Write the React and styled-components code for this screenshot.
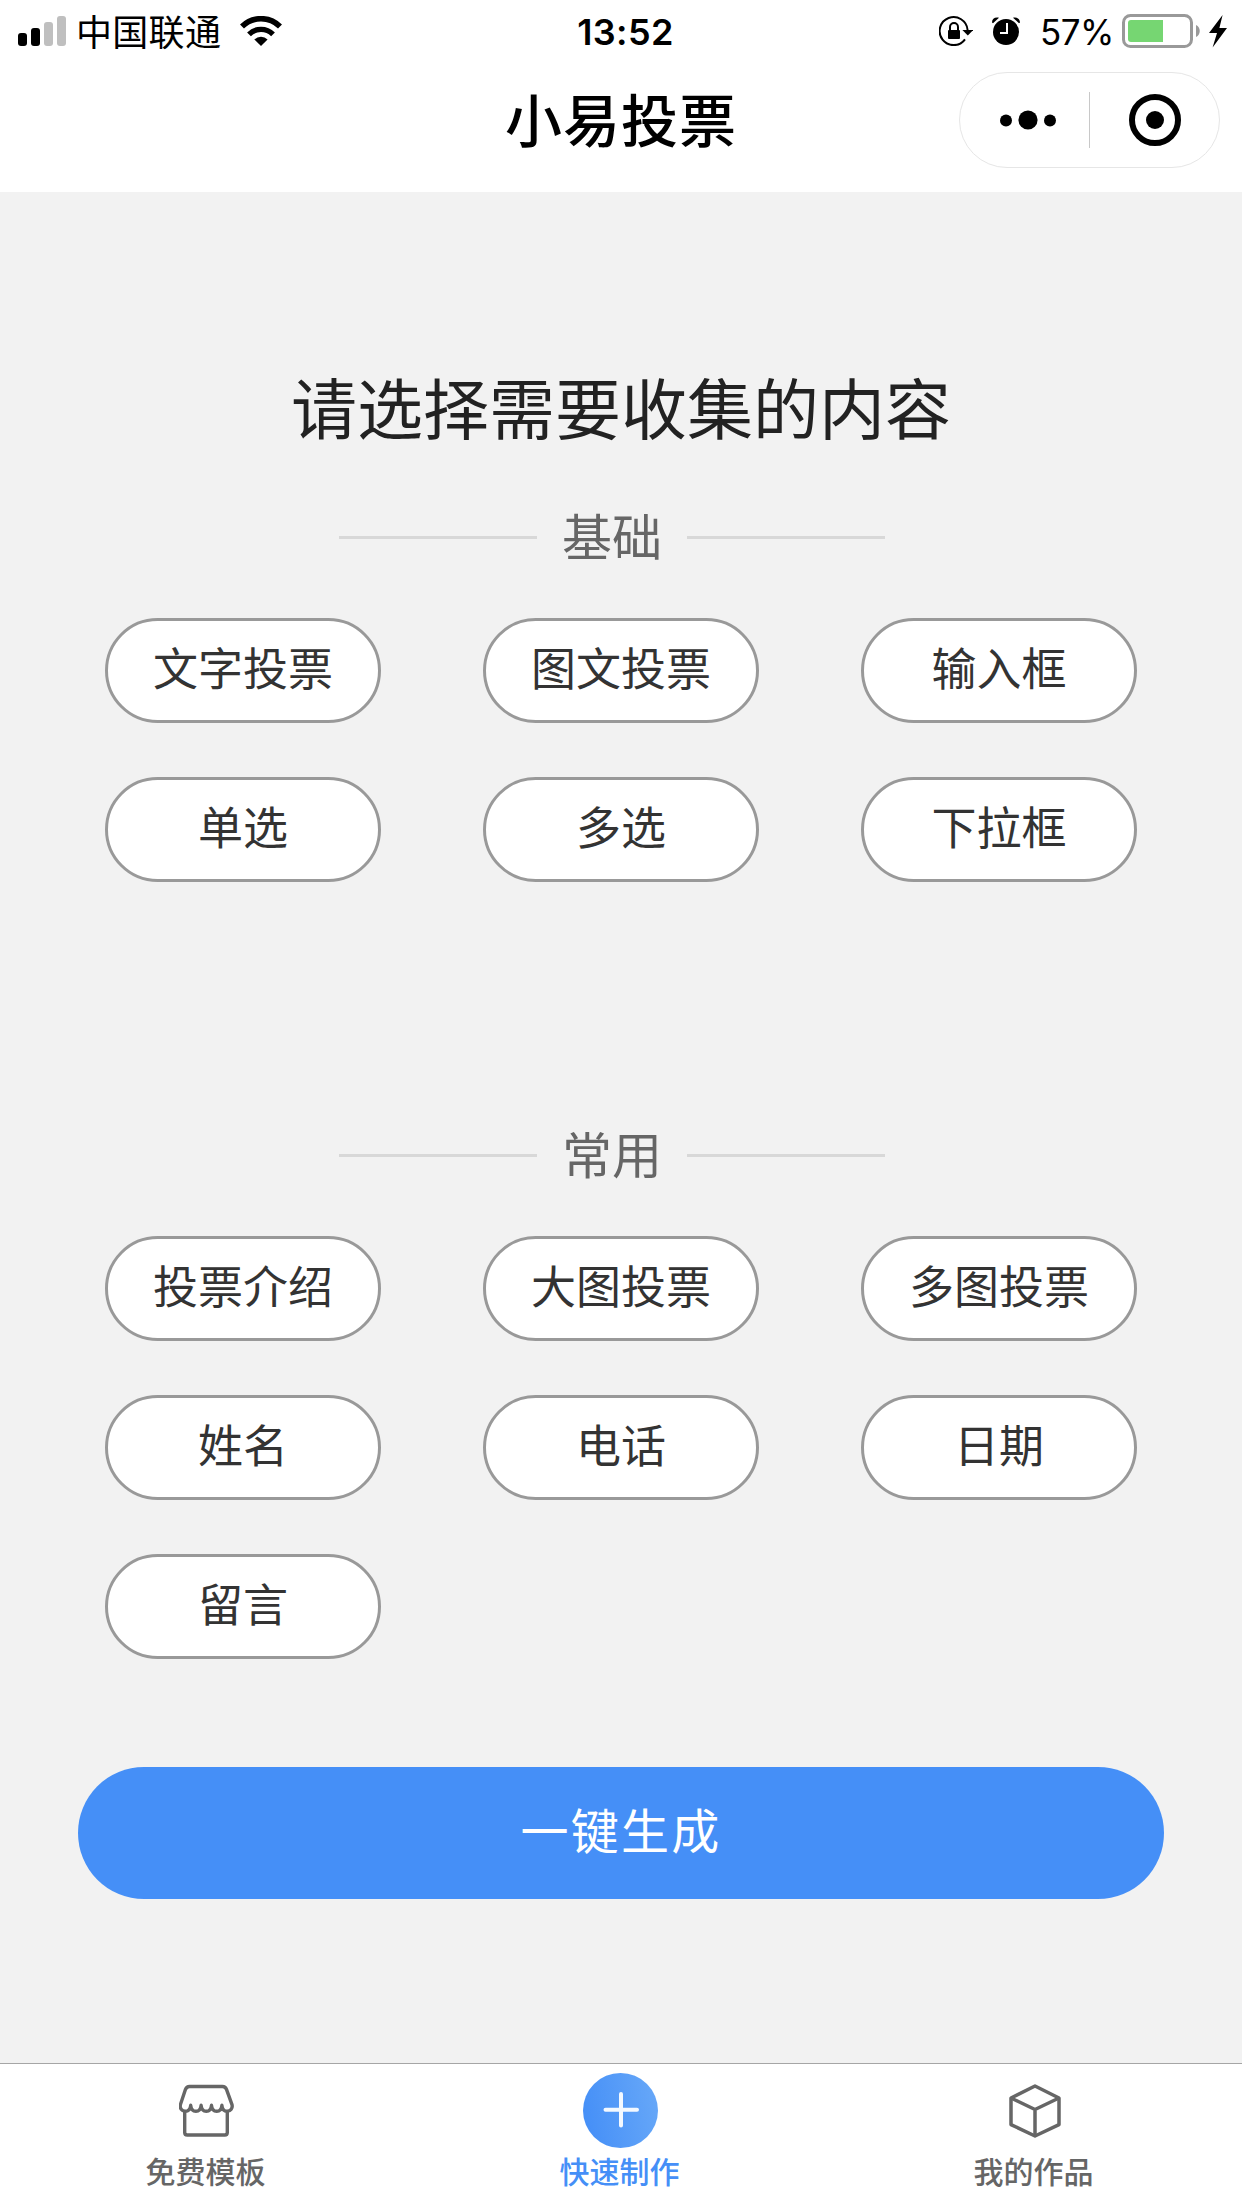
import React from 'react'
import styled, { createGlobalStyle } from 'styled-components'

const GlobalStyle = createGlobalStyle`
  body {
    margin: 0;
    background: #f2f2f2;
    font-family: 'Noto Sans CJK SC', sans-serif;
  }
`

const PageWrapper = styled.div`
  display: flex;
  flex-direction: column;
  width: 1242px;
  height: 2208px;
  background: #f2f2f2;
  overflow: hidden;
`

const Header = styled.header`
  display: flex;
  flex-direction: column;
  height: 192px;
  background: #fff;
  color: #000;
`

const StatusBar = styled.div`
  display: grid;
  grid-template-columns: 1fr 200px 1fr;
  align-items: center;
  height: 60px;
`

const StatusLeft = styled.div`
  display: flex;
  align-items: center;
  height: 60px;
  padding-left: 18px;
`

const StatusRight = styled.div`
  display: flex;
  align-items: center;
  justify-content: flex-end;
  height: 60px;
  padding-right: 14px;
`

const Carrier = styled.span`
  margin: 0 19px 0 9px;
  padding-bottom: 2px;
  font-size: 36px;
  line-height: 58px;
  letter-spacing: 0.3px;
`

const Clock = styled.span`
  padding: 2px 0 0 9px;
  font-family: Inter, sans-serif;
  font-size: 36px;
  font-weight: 600;
  line-height: 60px;
  letter-spacing: 0.4px;
  text-align: center;
`

const Percent = styled.span`
  width: 74px;
  margin: 2px 8px 0 20px;
  font-family: Inter, sans-serif;
  font-size: 35px;
  line-height: 60px;
  letter-spacing: -0.5px;
  white-space: nowrap;
`

const StatusIcon = styled.svg`
  margin-left: ${({ $gap }) => $gap || 0}px;
`

const NavBar = styled.div`
  display: grid;
  grid-template-columns: 1fr auto 1fr;
  align-items: center;
  height: 120px;
`

const NavTitle = styled.h1`
  grid-column: 2;
  margin: 0;
  padding-bottom: 6px;
  font-size: 57px;
  font-weight: 500;
  line-height: 114px;
  letter-spacing: 1px;
`

const Capsule = styled.div`
  display: flex;
  align-items: center;
  justify-self: end;
  box-sizing: border-box;
  width: 261px;
  height: 96px;
  margin-right: 22px;
  border: 1px solid #e6e6e6;
  border-radius: 48px;
`

const CapsuleButton = styled.button`
  display: flex;
  align-items: center;
  justify-content: center;
  width: 129px;
  padding: 0 0 0 ${({ $inset }) => $inset || 0}px;
  border: 0;
  background: none;
`

const CapsuleDivider = styled.span`
  width: 1px;
  height: 56px;
  background: #c8c8c8;
`

const Content = styled.main`
  display: flex;
  flex: 1;
  flex-direction: column;
  align-items: center;
`

const ContentTitle = styled.h2`
  margin: 163px 0 0;
  padding-bottom: 2px;
  color: #222;
  font-size: 66px;
  font-weight: 400;
  line-height: 100px;
`

const Section = styled.section`
  display: flex;
  flex-direction: column;
  align-items: center;
  width: 100%;
  height: 618px;
`

const SectionTitle = styled.div`
  display: flex;
  align-items: center;
  justify-content: center;
  width: 546px;
  height: 80px;
  margin: 40px 18px 41px 0;
`

const SectionLine = styled.span`
  flex: 1;
  height: 3px;
  background: #d8d8d8;
`

const SectionLabel = styled.h3`
  width: 150px;
  margin: 0;
  padding-bottom: 5px;
  color: #666;
  font-size: 50px;
  font-weight: 400;
  line-height: 75px;
  text-align: center;
`

const OptionGrid = styled.div`
  display: grid;
  grid-template-columns: repeat(3, 276px);
  gap: 54px 102px;
`

const OptionButton = styled.button`
  box-sizing: border-box;
  height: 105px;
  padding: 0 0 7px;
  border: 3px solid #999;
  border-radius: 53px;
  background: #fff;
  color: #333;
  font-family: inherit;
  font-size: 45px;
  line-height: 92px;
`

const SubmitButton = styled.button`
  width: 1086px;
  height: 132px;
  margin-top: 74px;
  padding: 0 0 10px;
  border: 0;
  border-radius: 66px;
  background: #458ff7;
  color: #fff;
  font-family: inherit;
  font-size: 48px;
  letter-spacing: 2.2px;
`

const TabBar = styled.nav`
  display: grid;
  grid-template-columns: repeat(3, 1fr);
  box-sizing: border-box;
  height: 145px;
  border-top: 1px solid #a6a6a6;
  background: #fff;
`

const TabLink = styled.a`
  display: flex;
  flex-direction: column;
  align-items: center;
  padding-right: 1px;
  color: ${({ $active }) => ($active ? '#458ff7' : '#666')};
`

const TabIcon = styled.span`
  display: flex;
  align-items: center;
  justify-content: center;
  height: 75px;
  margin-top: 9px;
`

const TabLabel = styled.span`
  padding: 2px 2px 0 0;
  font-size: 30px;
  font-weight: 500;
  line-height: 40px;
`

const basicOptions = ['文字投票', '图文投票', '输入框', '单选', '多选', '下拉框']
const commonOptions = ['投票介绍', '大图投票', '多图投票', '姓名', '电话', '日期', '留言']

function SignalIcon() {
  return (
    <StatusIcon width="49" height="30" viewBox="0 0 49 30">
      <rect x="0" y="17" width="9" height="13" rx="3" />
      <rect x="13" y="12" width="9" height="18" rx="3" />
      <rect x="26" y="6" width="9" height="24" rx="3" fill="#bfbfbf" />
      <rect x="39" y="0" width="9" height="30" rx="3" fill="#bfbfbf" />
    </StatusIcon>
  )
}

function WifiIcon() {
  return (
    <StatusIcon width="42" height="30" viewBox="0 0 42 30">
      <path d="M2 10.5a27 27 0 0 1 38 0" fill="none" stroke="#000" strokeWidth="5.6" />
      <path d="M9 18.3a17 17 0 0 1 24 0" fill="none" stroke="#000" strokeWidth="5.4" />
      <path d="M21 30l-6.6-6.6a9.4 9.4 0 0 1 13.2 0z" />
    </StatusIcon>
  )
}

function RotationLockIcon() {
  return (
    <StatusIcon width="34" height="30" viewBox="0 0 34 30">
      <path d="M26 23.3A14 14 0 1 1 28.6 14" fill="none" stroke="#000" strokeWidth="2" />
      <path d="M23.4 14h10.8l-5.4 5.6z" />
      <rect x="9" y="14" width="12" height="9" rx="1" />
      <path d="M11 15v-4a4 4 0 0 1 8 0v4" fill="none" stroke="#000" strokeWidth="2" />
    </StatusIcon>
  )
}

function AlarmIcon() {
  return (
    <StatusIcon $gap={19} width="28" height="28" viewBox="0 0 28 28">
      <circle cx="14" cy="15" r="13" />
      <path d="M0 5.5C0 1.5 3 0 7 .8L1 6.2zM28 5.5C28 1.5 25 0 21 .8l6 5.4z" />
      <path d="M15 6v10H8" fill="none" stroke="#fff" strokeWidth="2" />
    </StatusIcon>
  )
}

function BatteryIcon() {
  return (
    <StatusIcon width="78" height="34" viewBox="0 0 78 34">
      <rect x="1.5" y="1.5" width="68" height="31" rx="7" fill="none" stroke="#999" strokeWidth="3" />
      <path d="M9 6h32v22H9a3 3 0 0 1-3-3V9a3 3 0 0 1 3-3z" fill="#76d672" />
      <path d="M74 11c5 2 5 10 0 12z" fill="#999" />
    </StatusIcon>
  )
}

function BoltIcon() {
  return (
    <StatusIcon $gap={9} width="19" height="33" viewBox="0 0 19 33">
      <path d="M13.6 0L0 18h8L3.6 32.5 18 13h-7.6z" />
    </StatusIcon>
  )
}

function MoreIcon() {
  return (
    <svg width="56" height="20" viewBox="0 0 56 20">
      <circle cx="6" cy="10.5" r="6" />
      <circle cx="28" cy="10" r="9.6" />
      <circle cx="50" cy="10.5" r="6" />
    </svg>
  )
}

function TargetIcon() {
  return (
    <svg width="52" height="52" viewBox="0 0 52 52">
      <circle cx="26" cy="26" r="23" fill="none" stroke="#000" strokeWidth="6" />
      <circle cx="26" cy="26" r="9" />
    </svg>
  )
}

function ShopIcon() {
  return (
    <svg width="56" height="54" viewBox="0 0 56 54" fill="none" stroke="#666" strokeWidth="3.4" strokeLinejoin="round">
      <path d="M10.5 2.5h33c2 0 3.3 1 4 2.8l5.4 15c1.2 4-1.5 7-4.7 7s-5-2-5.3-6c-.4 4-2.4 6-5.2 6s-4.8-2-5.2-6c-.4 4-2.4 6-5.2 6s-4.8-2-5.2-6c-.4 4-2.4 6-5.2 6s-4.8-2-5.2-6c-.4 4-2.2 6-5.5 6-3.200 0-5.900-3-4.700-7L6.500 5.300c.7-1.800 2-2.800 4-2.800z" />
      <path d="M5.700 27v21.500c0 1.500 1 2.500 2.500 2.500h37.600c1.500 0 2.500-1 2.500-2.500V27" />
    </svg>
  )
}

function PlusIcon() {
  return (
    <svg width="75" height="75" viewBox="0 0 75 75">
      <defs>
        <linearGradient id="plusFill" x1="0" y1="0.6" x2="1" y2="0.4">
          <stop offset="0" stopColor="#458ff7" />
          <stop offset="1" stopColor="#66a7f8" />
        </linearGradient>
      </defs>
      <circle cx="37.5" cy="37.5" r="37.5" fill="url(#plusFill)" />
      <path d="M38 21v31.5M22.5 36.7H54" stroke="#f4f9ff" strokeWidth="4" strokeLinecap="round" />
    </svg>
  )
}

function CubeIcon() {
  return (
    <svg width="52" height="54" viewBox="0 0 52 54" fill="none" stroke="#666" strokeWidth="3.5" strokeLinejoin="round">
      <path d="M26 2l24 12v26.600L26 52 2 40.600V14z" />
      <path d="M2 14l24 11.500L50 14M26 25.500V52" />
    </svg>
  )
}

function OptionSection({ title, options }) {
  return (
    <Section>
      <SectionTitle>
        <SectionLine />
        <SectionLabel>{title}</SectionLabel>
        <SectionLine />
      </SectionTitle>
      <OptionGrid>
        {options.map((option) => (
          <OptionButton key={option}>{option}</OptionButton>
        ))}
      </OptionGrid>
    </Section>
  )
}

function Tab({ icon, label, active }) {
  return (
    <TabLink $active={active}>
      <TabIcon>{icon}</TabIcon>
      <TabLabel>{label}</TabLabel>
    </TabLink>
  )
}

export default function App() {
  return (
    <PageWrapper>
      <GlobalStyle />
      <Header>
        <StatusBar>
          <StatusLeft>
            <SignalIcon />
            <Carrier>中国联通</Carrier>
            <WifiIcon />
          </StatusLeft>
          <Clock>13:52</Clock>
          <StatusRight>
            <RotationLockIcon />
            <AlarmIcon />
            <Percent>57%</Percent>
            <BatteryIcon />
            <BoltIcon />
          </StatusRight>
        </StatusBar>
        <NavBar>
          <NavTitle>小易投票</NavTitle>
          <Capsule>
            <CapsuleButton $inset={7}>
              <MoreIcon />
            </CapsuleButton>
            <CapsuleDivider />
            <CapsuleButton $inset={1}>
              <TargetIcon />
            </CapsuleButton>
          </Capsule>
        </NavBar>
      </Header>

      <Content>
        <ContentTitle>请选择需要收集的内容</ContentTitle>
        <OptionSection title="基础" options={basicOptions} />
        <OptionSection title="常用" options={commonOptions} />
        <SubmitButton>一键生成</SubmitButton>
      </Content>

      <TabBar>
        <Tab icon={<ShopIcon />} label="免费模板" />
        <Tab icon={<PlusIcon />} label="快速制作" active />
        <Tab icon={<CubeIcon />} label="我的作品" />
      </TabBar>
    </PageWrapper>
  )
}
